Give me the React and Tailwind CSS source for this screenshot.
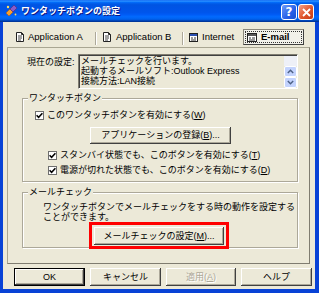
import React from "react";

const Check = () => (
  <span className="w-[9px] h-[9px] border border-[#6f6f6f] bg-white flex items-center justify-center shrink-0">
    <svg width="7" height="7" viewBox="0 0 7 7">
      <path d="M0.6 3.2 L2.6 5.3 L6.4 1.2" stroke="#000" strokeWidth="1.5" fill="none" />
    </svg>
  </span>
);

const U = ({ children }) => <span className="underline">{children}</span>;

const DocIcon = () => (
  <svg width="8" height="10" viewBox="0 0 8 10" className="shrink-0">
    <path d="M0.5 0.5h5l2 2v7h-7z" fill="#fff" stroke="#222" />
    <path d="M5.5 0.5v2h2" fill="none" stroke="#222" />
    <path d="M2 4h4M2 6h4M2 8h3" stroke="#444" />
  </svg>
);

const NetIcon = () => (
  <svg width="9" height="9" viewBox="0 0 9 9" className="shrink-0">
    <rect x="0.5" y="0.5" width="8" height="8" fill="#fff" stroke="#222" />
    <rect x="1" y="1" width="7" height="2" fill="#2a4fb0" />
    <path d="M2 5h2M5 5h2M2 7h5" stroke="#333" />
  </svg>
);

const MailIcon = () => (
  <svg width="10" height="9" viewBox="0 0 10 9" className="shrink-0">
    <rect x="0.5" y="0.5" width="9" height="8" fill="#fff" stroke="#222" />
    <rect x="1" y="1" width="8" height="2" fill="#555" />
    <path d="M2 5h2M5 5h3M2 7h6" stroke="#333" />
  </svg>
);

const TitleIcon = () => (
  <svg width="13" height="13" viewBox="0 0 13 13" className="shrink-0">
    <path d="M1 9 L5 5 L8 8 L4 12 Z" fill="#f7a030" stroke="#b05a10" strokeWidth="0.6" />
    <path d="M5 5 L9 1 L12 4 L8 8 Z" fill="#8a5cc8" stroke="#4a2a80" strokeWidth="0.6" />
    <circle cx="3" cy="3" r="1.2" fill="#ffe060" />
    <circle cx="10.5" cy="10.5" r="0.9" fill="#ffe060" />
  </svg>
);

const Btn = ({ children, className = "", isDefault = false, disabled = false }) => (
  <div
    className={
      "flex items-center justify-center bg-[#ece9d8] leading-none " +
      (isDefault
        ? "border border-black shadow-[inset_-1px_-1px_#404040,inset_1px_1px_#fff,inset_-2px_-2px_#aca899] "
        : "shadow-[inset_-1px_-1px_#404040,inset_1px_1px_#fff,inset_-2px_-2px_#aca899] ") +
      (disabled ? "text-[#aca899] [text-shadow:1px_1px_0_#fff] " : "text-black ") +
      className
    }
  >
    {children}
  </div>
);

const Sep = () => <span className="w-[2px] h-[13px] self-center border-l border-[#aca899] border-r border-r-white shrink-0" />;

export default function App() {
  return (
    <div className="w-[319px] h-[293px] bg-[#0842d6] flex flex-col font-['Liberation_Sans','Noto_Sans_CJK_JP',sans-serif] text-[9px] text-black overflow-hidden">
      {/* title bar */}
      <div className="h-[22px] shrink-0 flex items-start bg-[linear-gradient(to_bottom,#0058ee_0%,#3593ff_4%,#288eff_6%,#127dff_8%,#036ffc_10%,#0262ee_14%,#0057e5_20%,#0054e3_24%,#0055eb_56%,#005bf5_66%,#026afe_76%,#0062ef_86%,#0052d6_92%,#0040ab_94%,#003092_100%)]">
        <div className="ml-[5px] mt-[4px]">
          <TitleIcon />
        </div>
        <span className="ml-[3px] mt-[6px] leading-[11px] text-white font-bold text-[9px] [text-shadow:1px_1px_0_#0a1883]">
          ワンタッチボタンの設定
        </span>
        <div className="ml-auto mr-[5px] mt-[4px] flex gap-[1px]">
          <div className="w-[16px] h-[16px] rounded-[3px] border border-white bg-[linear-gradient(135deg,#6d9bf8,#2760e8_60%,#1a4fd0)] flex items-center justify-center text-white font-bold text-[12px] leading-none font-['DejaVu_Sans',sans-serif]">
            ?
          </div>
          <div className="w-[16px] h-[16px] rounded-[3px] border border-white bg-[linear-gradient(135deg,#f4a088,#e0552c_55%,#c23a16)] flex items-center justify-center">
            <svg width="9" height="9" viewBox="0 0 9 9">
              <path d="M1 1 L8 8 M8 1 L1 8" stroke="#fff" strokeWidth="1.8" />
            </svg>
          </div>
        </div>
      </div>

      {/* body */}
      <div className="ml-[3px] w-[312px] h-[267px] bg-[#ece9d8] flex flex-col">
        {/* tabs */}
        <div className="h-[25px] shrink-0 flex items-start pt-[7px] pl-[13px] text-[9.5px]">
          <div className="h-[16px] flex items-center">
            <DocIcon />
            <span className="ml-[4px] w-[67px] leading-none">Application A</span>
          </div>
          <Sep />
          <div className="h-[16px] flex items-center ml-[6px]">
            <DocIcon />
            <span className="ml-[5px] w-[66px] leading-none">Application B</span>
          </div>
          <Sep />
          <div className="h-[16px] flex items-center ml-[5px]">
            <NetIcon />
            <span className="ml-[4px] w-[37px] leading-none">Internet</span>
          </div>
          <div className="h-[16px] w-[61px] ml-[4px] flex items-stretch border border-[#8a877a] border-r-[#404040] border-b-[#404040] bg-[#f2f1ea] p-[1px]">
            <div className="flex-1 flex items-center border border-dotted border-[#333] pl-[1px]">
              <MailIcon />
              <span className="ml-[4px] font-bold leading-none">E-mail</span>
            </div>
          </div>
        </div>

        {/* panel */}
        <div className="ml-[4px] w-[303px] h-[217px] shrink-0 border border-[#a9a692] border-r-[#7f7c70] border-b-[#7f7c70] flex flex-col">
          {/* current setting */}
          <div className="flex items-start mt-[6px] ml-[19px]">
            <span className="w-[51px] leading-[11px] mt-[3px] whitespace-nowrap">現在の設定:</span>
            <div className="w-[220px] h-[35px] border border-[#7f7c70] border-r-white border-b-white shadow-[inset_1px_1px_0_#404040] bg-[#ece9d8] flex">
              <div className="flex-1 pl-[2px] pt-[1px] leading-[10px] whitespace-nowrap overflow-hidden">
                <div>メールチェックを行います。</div>
                <div>起動するメールソフト:Outlook Express</div>
                <div>接続方法:LAN接続</div>
              </div>
              <div className="w-[13px] mt-[1px] mb-[0px] flex flex-col">
                <div className="h-[10px] bg-[#eef0f7]" />
                <div className="h-[11px] rounded-[2px] border border-white bg-[#c3d3fd] flex items-center justify-center">
                  <svg width="7" height="5" viewBox="0 0 7 5">
                    <path d="M0.8 4 L3.5 1.2 L6.2 4" stroke="#4d6185" strokeWidth="1.4" fill="none" />
                  </svg>
                </div>
                <div className="h-[11px] rounded-[2px] border border-white bg-[#c3d3fd] flex items-center justify-center">
                  <svg width="7" height="5" viewBox="0 0 7 5">
                    <path d="M0.8 1 L3.5 3.8 L6.2 1" stroke="#4d6185" strokeWidth="1.4" fill="none" />
                  </svg>
                </div>
              </div>
            </div>
          </div>

          {/* group 1 */}
          <fieldset className="mt-[4px] ml-[14px] w-[276px] border border-[#aca899] shadow-[inset_1px_1px_0_#fff,1px_1px_0_#fff] pb-[5px]">
            <legend className="ml-[5px] px-[1px] leading-[11px] bg-[#ece9d8]">ワンタッチボタン</legend>
            <div className="flex items-center mt-[6px] ml-[12px] h-[11px]">
              <Check />
              <span className="ml-[3px] leading-[11px] whitespace-nowrap">
                このワンタッチボタンを有効にする(<U>W</U>)
              </span>
            </div>
            <Btn className="mt-[6px] ml-[67px] w-[141px] h-[17px]">
              アプリケーションの登録(<U>B</U>)...
            </Btn>
            <div className="flex items-center mt-[6px] ml-[25px] h-[11px]">
              <Check />
              <span className="ml-[3px] leading-[11px] whitespace-nowrap">
                スタンバイ状態でも、このボタンを有効にする(<U>T</U>)
              </span>
            </div>
            <div className="flex items-center mt-[4px] ml-[25px] h-[11px]">
              <Check />
              <span className="ml-[3px] leading-[11px] whitespace-nowrap">
                電源が切れた状態でも、このボタンを有効にする(<U>D</U>)
              </span>
            </div>
          </fieldset>

          {/* group 2 */}
          <fieldset className="mt-[5px] ml-[14px] w-[276px] border border-[#aca899] shadow-[inset_1px_1px_0_#fff,1px_1px_0_#fff] pb-[2px]">
            <legend className="ml-[5px] px-[1px] leading-[11px] bg-[#ece9d8]">メールチェック</legend>
            <div className="mt-[4px] ml-[20px] leading-[10px] whitespace-nowrap">
              ワンタッチボタンでメールチェックをする時の動作を設定する
              <br />
              ことができます。
            </div>
            <div className="relative mt-[5px] ml-[71px] w-[130px] h-[18px]">
              <Btn className="w-full h-full">
                メールチェックの設定(<U>M</U>)...
              </Btn>
              <div className="absolute -top-[5px] -left-[5px] -right-[5px] -bottom-[4px] border-[3px] border-[#ff0000]" />
            </div>
          </fieldset>
        </div>

        {/* bottom buttons */}
        <div className="flex mt-[4px] ml-[11px]">
          <Btn isDefault className="w-[71px] h-[18px]">OK</Btn>
          <Btn className="ml-[5px] w-[71px] h-[18px]">キャンセル</Btn>
          <Btn disabled className="ml-[5px] w-[70px] h-[18px]">
            適用(<U>A</U>)
          </Btn>
          <Btn className="ml-[5px] w-[71px] h-[18px]">ヘルプ</Btn>
        </div>
      </div>
    </div>
  );
}
